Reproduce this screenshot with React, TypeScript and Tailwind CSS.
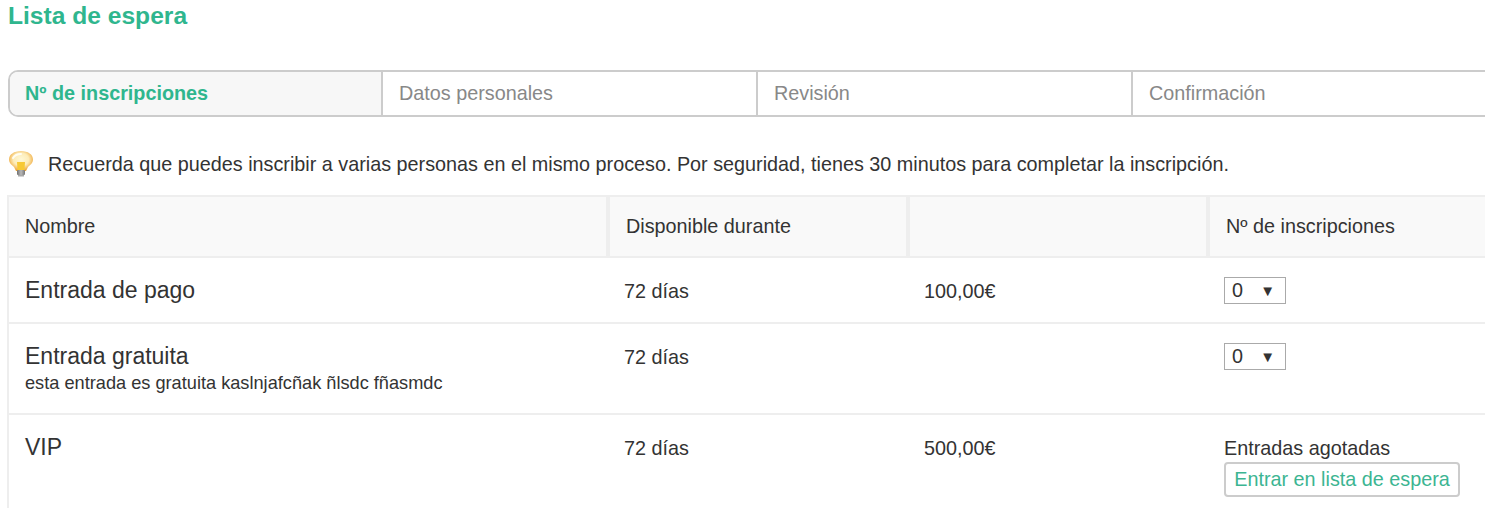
const font = "font-['Liberation_Sans',Arial,sans-serif]";

const steps = ["Nº de inscripciones", "Datos personales", "Revisión", "Confirmación"];

const tickets = [
  { name: "Entrada de pago", note: "", price: "100,00€", soldOut: false, rowClass: "h-[66px] pt-[17px]" },
  {
    name: "Entrada gratuita",
    note: "esta entrada es gratuita kaslnjafcñak ñlsdc fñasmdc",
    price: "",
    soldOut: false,
    rowClass: "h-[91px] pt-[17px]",
  },
  { name: "VIP", note: "", price: "500,00€", soldOut: true, rowClass: "h-[110px] pt-[17px]" },
];

function Bulb() {
  return (
    <svg width="26" height="28" viewBox="0 0 26 28" className="shrink-0">
      <defs>
        <radialGradient id="glass" cx="50%" cy="42%" r="58%">
          <stop offset="0%" stopColor="#fff8d6" />
          <stop offset="55%" stopColor="#fdecb8" />
          <stop offset="85%" stopColor="#f3bb5e" />
          <stop offset="100%" stopColor="#eba234" />
        </radialGradient>
        <linearGradient id="base" x1="0" y1="0" x2="1" y2="0">
          <stop offset="0%" stopColor="#6f6f6f" />
          <stop offset="50%" stopColor="#b9b9b9" />
          <stop offset="100%" stopColor="#777777" />
        </linearGradient>
      </defs>
      <path
        d="M13 1C6 1 1 4.500 1 9.500c0 3.500 3 5.700 5 7.500L8 21h10l2-4c2-1.800 5-4 5-7.500C25 4.500 20 1 13 1z"
        fill="url(#glass)"
      />
      <path d="M5 8c1.500-2.500 4.500-4 8-4" stroke="#fffdf2" strokeWidth="2" fill="none" strokeLinecap="round" />
      <path d="M9 12h8l-.5 8h-7z" fill="#f7c935" />
      <rect x="9" y="20" width="8" height="5" rx="1" fill="url(#base)" />
      <rect x="10" y="25" width="6" height="1.500" fill="#a8a8a8" />
    </svg>
  );
}

function Quantity() {
  return (
    <div className="flex h-[27px] w-[62px] items-center justify-between border border-[#aaaaaa] bg-white pl-[7px] pr-[10px] text-[19.8px] text-[#333333]">
      <span>0</span>
      <span className="text-[15px] leading-none">▼</span>
    </div>
  );
}

export default function App() {
  return (
    <div className={`${font} h-[508px] w-[1485px] overflow-hidden bg-white pl-2 text-[#333333]`}>
      <h1 className="h-[70px] pt-[1px] text-[24.6px] leading-[30px] font-bold text-[#2fb68e]">Lista de espera</h1>

      <div className="flex h-[47px] w-[1520px] rounded-l-[10px] border-2 border-[#cccccc]">
        {steps.map((step, i) => (
          <div
            key={step}
            className={`flex h-full items-center border-r-2 border-[#cccccc] text-[19.8px] ${
              i === 0
                ? "w-[373px] rounded-l-[8px] bg-[#f7f7f7] pl-[15px] font-bold text-[#2fb68e]"
                : "w-[375px] pl-[16px] text-[#888888]"
            }`}
          >
            {step}
          </div>
        ))}
      </div>

      <div className="flex h-[78px] items-start gap-[14px] pt-[33px] text-[19.8px] leading-[28px]">
        <Bulb />
        <p className="whitespace-nowrap">
          Recuerda que puedes inscribir a varias personas en el mismo proceso. Por seguridad, tienes 30 minutos para
          completar la inscripción.
        </p>
      </div>

      <div className="-ml-px w-[1500px] border-l-2 border-[#eeeeee]">
        <div className="flex h-[63px] border-y-2 border-[#eeeeee] bg-[#f9f9f9] text-[19.8px]">
          <div className="flex w-[597px] items-center pl-[16px]">Nombre</div>
          <div className="flex w-[300px] items-center border-l-4 border-[#eeeeee] pl-[16px]">Disponible durante</div>
          <div className="w-[300px] border-l-4 border-[#eeeeee]" />
          <div className="flex flex-1 items-center border-l-4 border-[#eeeeee] pl-[16px]">Nº de inscripciones</div>
        </div>

        {tickets.map((ticket) => (
          <div key={ticket.name} className={`flex border-b-2 border-[#eeeeee] ${ticket.rowClass}`}>
            <div className="w-[615px] pl-[16px]">
              <div className="text-[23px] leading-[30px]">{ticket.name}</div>
              {ticket.note && <div className="text-[18.2px] leading-[24px]">{ticket.note}</div>}
            </div>
            <div className="w-[300px] text-[19.8px] leading-[32px]">72 días</div>
            <div className="w-[300px] text-[19.8px] leading-[32px]">{ticket.price}</div>
            <div className="flex-1">
              {ticket.soldOut ? (
                <div>
                  <div className="text-[19.8px] leading-[32px]">Entradas agotadas</div>
                  <button className="-mt-[2px] block h-[35px] w-[236px] rounded-[4px] border-2 border-[#cccccc] text-center text-[19.8px] text-[#3cb592]">
                    Entrar en lista de espera
                  </button>
                </div>
              ) : (
                <div className="pt-[2px]">
                  <Quantity />
                </div>
              )}
            </div>
          </div>
        ))}
      </div>
    </div>
  );
}
